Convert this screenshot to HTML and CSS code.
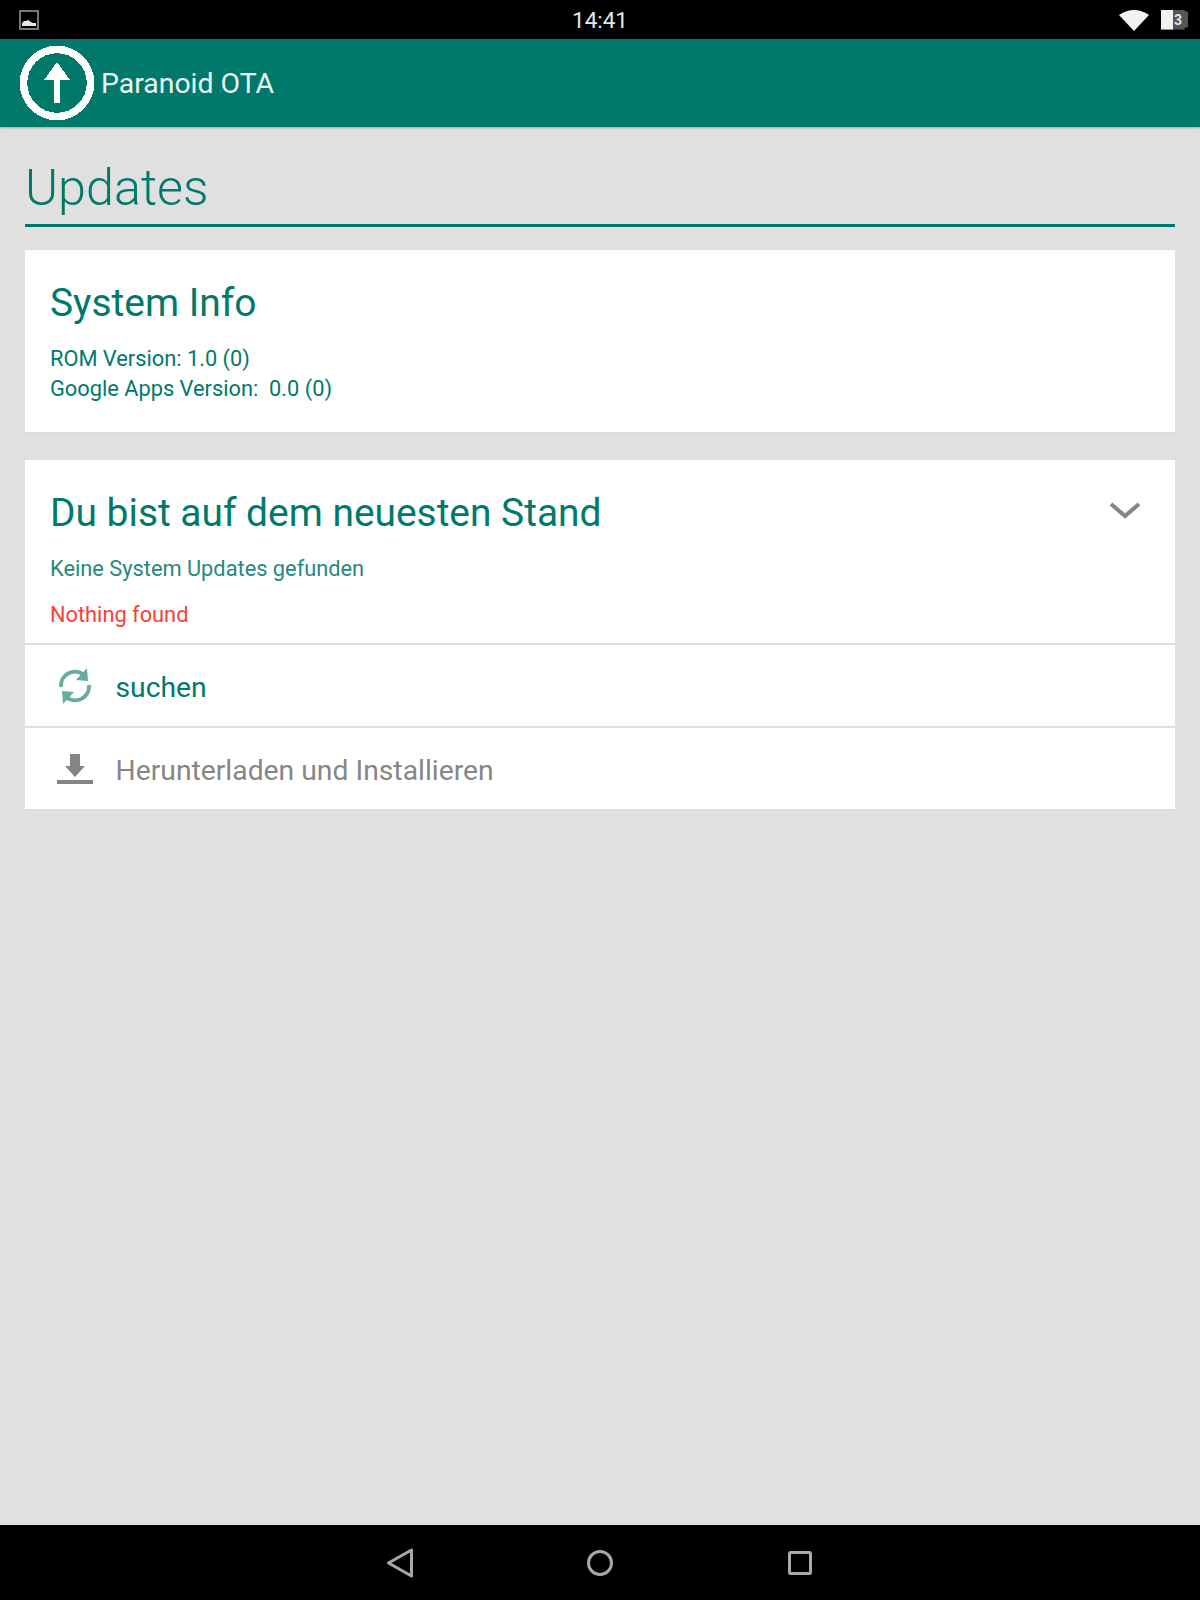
FILE: index.html
```html
<!DOCTYPE html>
<html lang="de">
<head>
  <meta charset="UTF-8" />
  <title>Paranoid OTA</title>
  <link rel="stylesheet" href="styles.css">
</head>
<body>
  <div class="screen">

    <!-- Status bar -->
    <div class="status-bar">
      <svg class="pic-icon" width="20" height="20" viewBox="0 0 20 20">
        <rect x="1" y="1" width="18" height="18" fill="none" stroke="#a0a0a0" stroke-width="1.5" />
        <path d="M3 16v-3l2-2 2 0 2-1 3 2 2 1 3 0v3z" fill="#e8e8e8" />
      </svg>
      <span class="clock">14:41</span>
      <div class="status-right">
        <svg width="32" height="22" viewBox="0 0 32 22">
          <path d="M1 6Q16 -4 31 6L16 22z" fill="#f2f2f2" />
        </svg>
        <div class="battery">
          <div class="battery-fill"></div>
          <span class="battery-num">3</span>
        </div>
      </div>
    </div>

    <!-- App bar -->
    <div class="app-bar">
      <svg class="app-logo" width="76" height="76" viewBox="0 0 76 76" shape-rendering="crispEdges">
        <circle cx="38" cy="38" r="33.5" fill="none" stroke="#fff" stroke-width="7.5" />
        <path d="M38 17L25 35h10v23h6V35h10z" fill="#fff" />
      </svg>
      <span class="app-title">Paranoid OTA</span>
    </div>

    <!-- Content -->
    <div class="content">
      <h1 class="page-title">Updates</h1>

      <div class="card info-card">
        <h2 class="card-title">System Info</h2>
        <p class="info-line first">ROM Version: 1.0 (0)</p>
        <p class="info-line">Google Apps Version:&nbsp; 0.0 (0)</p>
      </div>

      <div class="card">
        <div class="status-block">
          <div class="status-head">
            <h2 class="card-title">Du bist auf dem neuesten Stand</h2>
            <svg class="chevron" width="32" height="18" viewBox="0 0 32 18">
              <path d="M2 3L16 15 30 3" fill="none" stroke="#858585" stroke-width="4" />
            </svg>
          </div>
          <p class="status-sub">Keine System Updates gefunden</p>
          <p class="status-error">Nothing found</p>
        </div>
        <div class="action-row active">
          <svg class="action-icon" width="36" height="38" viewBox="0 0 36 38">
            <path d="M4 20A14 14 0 0 1 27 8" fill="none" stroke="#66ada1" stroke-width="4" />
            <path d="M30 1L31 14 19 13z" fill="#66ada1" />
            <path d="M32 18A14 14 0 0 1 9 30" fill="none" stroke="#66ada1" stroke-width="4" />
            <path d="M6 37L5 24 17 25z" fill="#66ada1" />
          </svg>
          <span>suchen</span>
        </div>
        <div class="action-row disabled">
          <svg class="action-icon" width="36" height="30" viewBox="0 0 36 30">
            <path d="M13 0h10v12h5L18 23 8 12h5z" fill="#858585" />
            <rect x="0" y="26" width="36" height="4" fill="#858585" />
          </svg>
          <span>Herunterladen und Installieren</span>
        </div>
      </div>
    </div>

    <!-- Nav bar -->
    <div class="nav-bar">
      <svg width="28" height="32" viewBox="0 0 28 32">
        <path d="M25.5 3V29L2.5 16z" fill="none" stroke="#a8a8a8" stroke-width="3" stroke-linejoin="round" />
      </svg>
      <svg width="28" height="28" viewBox="0 0 28 28">
        <circle cx="14" cy="14" r="11.5" fill="none" stroke="#a8a8a8" stroke-width="3" />
      </svg>
      <svg width="28" height="28" viewBox="0 0 28 28">
        <rect x="3.5" y="3.5" width="21" height="21" rx="1" fill="none" stroke="#a8a8a8" stroke-width="3" />
      </svg>
    </div>

  </div>
</body>
</html>
```

FILE: styles.css
```css
* {
  box-sizing: border-box;
}

body {
  margin: 0;
  font-family: Roboto, "Liberation Sans", sans-serif;
  background-color: #e0e0e0;
}

h1, h2, p {
  margin: 0;
  font-weight: 400;
}

.screen {
  display: flex;
  flex-direction: column;
  height: 1600px;
}

.status-bar {
  height: 39px;
  background-color: #000;
  display: flex;
  align-items: center;
  justify-content: space-between;
  padding: 0 12px 0 19px;
  position: relative;
  flex-shrink: 0;
}

.clock {
  position: absolute;
  left: 0;
  right: 0;
  text-align: center;
  color: #e6e6e6;
  font-size: 22.5px;
}

.status-right {
  display: flex;
  align-items: center;
  gap: 11px;
}

.battery {
  width: 27px;
  height: 20px;
  background-color: #555;
  display: flex;
  position: relative;
  clip-path: polygon(0 0, 88% 0, 88% 10%, 100% 10%, 100% 90%, 88% 90%, 88% 100%, 0 100%);
}

.battery-fill {
  width: 12px;
  background-color: #f2f2f2;
}

.battery-num {
  position: absolute;
  left: 13px;
  top: 1px;
  font-size: 14px;
  line-height: 18px;
  font-weight: 700;
  color: #e6e6e6;
}

.app-bar {
  height: 88px;
  background-color: #00796b;
  display: flex;
  align-items: center;
  padding-left: 19px;
  box-shadow: 0 1px 2px rgba(0,0,0,0.25);
  flex-shrink: 0;
  position: relative;
}

.app-title {
  margin-left: 6px;
  color: #eef6f4;
  font-size: 28.4px;
}

.content {
  flex: 1;
  padding: 0 25px;
}

.page-title {
  height: 100px;
  padding-top: 26px;
  border-bottom: 3px solid #00796b;
  color: #00796b;
  font-size: 50.3px;
  font-weight: 300;
  line-height: 70px;
  margin-bottom: 23px;
}

.card {
  background-color: #fff;
  box-shadow: 0 2px 1px rgba(0,0,0,0.015);
  margin-bottom: 28px;
}

.info-card {
  height: 182px;
  padding: 27px 25px 0;
}

.card-title {
  color: #00796b;
  font-size: 38.9px;
  line-height: 52px;
}

.info-line {
  color: #00796b;
  font-size: 21.8px;
  line-height: 30px;
}

.info-line.first {
  margin-top: 15px;
}

.status-block {
  height: 185px;
  padding: 27px 25px 0;
  border-bottom: 2px solid #e0e0e0;
}

.status-head {
  display: flex;
  align-items: center;
  justify-content: space-between;
  padding-right: 9px;
}

.chevron {
  margin-bottom: 6px;
}

.status-sub {
  margin-top: 15px;
  color: #26897d;
  font-size: 21.8px;
  line-height: 30px;
}

.status-error {
  margin-top: 16px;
  color: #f44336;
  font-size: 21.8px;
  line-height: 30px;
}

.action-row {
  height: 83px;
  display: flex;
  align-items: center;
  padding-left: 32px;
  font-size: 28.3px;
  border-bottom: 2px solid #e0e0e0;
}

.action-row span {
  padding-top: 3px;
}

.action-row:last-child {
  height: 81px;
  border-bottom: none;
}

.action-row.active {
  color: #00796b;
}

.action-row.disabled {
  color: #868686;
}

.action-icon {
  margin-right: 22.5px;
}

.nav-bar {
  height: 75px;
  background-color: #000;
  display: flex;
  align-items: center;
  justify-content: center;
  gap: 172px;
  flex-shrink: 0;
}
```
